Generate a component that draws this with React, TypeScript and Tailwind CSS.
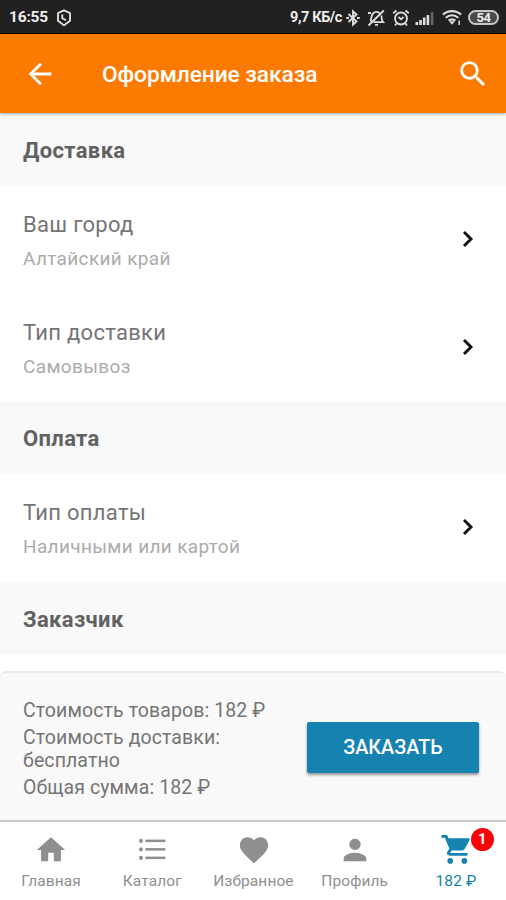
import type { ReactNode } from "react";
import { MdArrowBack, MdFavorite, MdHome, MdPerson, MdSearch } from "react-icons/md";

function ShieldIcon() {
  return (
    <svg width="16" height="18" viewBox="0 0 16 18" fill="none" stroke="#e8e8e8" strokeWidth="1.8">
      <path d="M8 1.4 14 4V11.8L8 16.4 2 11.8V4Z" strokeLinejoin="round" />
      <path d="M6.3 5.6V9.2L10 11.2" />
    </svg>
  );
}

function BluetoothIcon() {
  return (
    <svg width="14" height="18" viewBox="0 0 14 18" fill="none" stroke="#dedede" strokeWidth="1.9">
      <path d="M2.5 5 10.5 12.5 7 15.7V2.3L10.5 5.5 2.5 13" />
      <path d="M.3 9H3M11 9H13.7" />
    </svg>
  );
}

function BellOffIcon() {
  return (
    <svg width="18" height="18" viewBox="0 0 18 18" fill="none" stroke="#dedede" strokeWidth="1.8">
      <path d="M3.5 12.5C4.5 11 4 6 6 4.5 8 2.5 11 2.5 12.5 4.2M14.5 6.5C14.5 9 14.5 11.5 16.2 13.2H6.5M8 15.8H11M1 4H4M16.8 1.5 1.5 16.5" />
    </svg>
  );
}

function AlarmIcon() {
  return (
    <svg width="18" height="18" viewBox="0 0 18 18" fill="none" stroke="#dedede" strokeWidth="1.8">
      <circle cx="9" cy="9.5" r="6" />
      <path d="M1.2 4.2 4.5 1.5M16.8 4.2 13.5 1.5M6.5 8 9 10.3 11.5 8M4.5 14.5 3 16.5M13.5 14.5 15 16.5" />
    </svg>
  );
}

function SignalIcon() {
  return (
    <svg width="20" height="16" viewBox="0 0 20 16" fill="#dedede">
      <rect x="0.5" y="12" width="2.6" height="3" />
      <rect x="4.2" y="10" width="2.6" height="5" />
      <rect x="7.9" y="7.5" width="2.6" height="7.5" />
      <rect x="11.6" y="5" width="2.6" height="10" />
      <rect x="15.8" y="2" width="2.6" height="13" fill="#666666" />
    </svg>
  );
}

function WifiIcon() {
  return (
    <svg width="20" height="17" viewBox="0 0 20 17" fill="none" stroke="#dedede" strokeWidth="2.2">
      <path d="M1 5.6C6 .9 14 .9 19 5.6M3.7 8.8C7.5 5.4 12.5 5.4 16.3 8.8M6.6 11.7C8.8 10 11.2 10 13.4 11.7" />
      <path d="M7 12.2 10 15.7 13 12.2Z" fill="#dedede" stroke="none" />
      <path d="M17.2 11.5V16" strokeWidth="1.5" />
    </svg>
  );
}

function ListIcon() {
  return (
    <svg width="34" height="34" viewBox="0 0 34 34" fill="#8f8f8f">
      <rect x="4.2" y="5.9" width="3.6" height="3.8" rx="1" />
      <rect x="4.2" y="14.4" width="3.6" height="3.8" rx="1" />
      <rect x="4.2" y="22.9" width="3.6" height="3.8" rx="1" />
      <rect x="10.4" y="6.6" width="20" height="2.5" />
      <rect x="10.4" y="15.1" width="20" height="2.5" />
      <rect x="10.4" y="23.6" width="20" height="2.5" />
    </svg>
  );
}

function CartIcon() {
  return (
    <svg width="34" height="34" viewBox="0 0 34 34" fill="currentColor">
      <path d="M2.5 2H8L9.6 5.2H29.6C30.6 5.2 31.1 6 30.6 6.9L25.8 15.8C25.2 16.9 24.4 17.4 23.2 17.4H12.6L11.3 20H28.5V22.8H10.6C8.6 22.8 7.3 21 8.3 19.1L10.3 15.6 5.8 4.7H2.5Z" />
      <circle cx="11.2" cy="27.9" r="2.8" />
      <circle cx="25.4" cy="27.9" r="2.8" />
    </svg>
  );
}

function Chevron() {
  return (
    <svg className="mr-8 mb-px" width="12" height="18" viewBox="0 0 12 18" fill="none" stroke="#111111" strokeWidth="2.9">
      <path d="M2 2 9 9 2 16" />
    </svg>
  );
}

function SectionTitle({ children }: { children: ReactNode }) {
  return (
    <h2 className="flex h-[73px] shrink-0 items-center bg-[#f9f9f9] pt-[2px] pl-[23px] text-[22px] font-bold tracking-[0.35px] text-[#616161]">
      {children}
    </h2>
  );
}

function Row({ title, value }: { title: string; value: string }) {
  return (
    <div className="flex h-[107.5px] shrink-0 items-center justify-between pl-[23px]">
      <div className="pt-[5px]">
        <p className="text-[22px] leading-[34px] tracking-[0.3px] text-[#757575]">{title}</p>
        <p className="text-[19px] leading-[34px] tracking-[0.35px] text-[#ababab]">{value}</p>
      </div>
      <Chevron />
    </div>
  );
}

function Tab({ icon, label, active }: { icon: ReactNode; label: string; active?: boolean }) {
  return (
    <div className={`flex flex-1 flex-col items-center pt-[11px] ${active ? "text-[#1682b0]" : "text-[#8f8f8f]"}`}>
      <div className="relative ml-px h-[34px] w-[34px]">{icon}</div>
      <span className="mt-[5px] ml-px text-[15.5px] leading-[18px] tracking-[0.1px]">{label}</span>
    </div>
  );
}

export default function App() {
  return (
    <div className="flex h-[900px] w-[506px] flex-col overflow-hidden bg-white font-['Roboto','Noto_Sans',sans-serif]">
      {/* Status bar */}
      <div className="flex h-[34px] shrink-0 items-center justify-between border-b border-black bg-[#212121] pt-[2px] pr-[7px] pl-[9px] text-[#eeeeee]">
        <div className="flex items-center gap-[8px]">
          <span className="text-[15.5px] font-bold tracking-[-0.2px]">16:55</span>
          <ShieldIcon />
        </div>
        <div className="flex items-center">
          <span className="text-[14.5px] font-bold tracking-[-0.4px]">9,7 КБ/с</span>
          <span className="ml-[4px]"><BluetoothIcon /></span>
          <span className="ml-[7px]"><BellOffIcon /></span>
          <span className="ml-[7px]"><AlarmIcon /></span>
          <span className="ml-[5px]"><SignalIcon /></span>
          <span className="ml-[7px]"><WifiIcon /></span>
          <span className="ml-[6px] flex h-[15px] w-[31px] items-center justify-center rounded-full border-2 border-[#c8c8c8] bg-[#4a4a4a] text-[13px] font-bold tracking-[-0.5px]">
            54
          </span>
        </div>
      </div>

      {/* App bar */}
      <header className="z-10 flex h-[79px] shrink-0 items-center bg-[#fc7a00] pr-4 pl-[23px] text-white shadow-[0_1px_3px_rgba(0,0,0,0.35)]">
        <MdArrowBack size={34} />
        <h1 className="ml-[45px] flex-1 pt-[3px] text-[22.8px] font-medium tracking-[-0.1px]">Оформление заказа</h1>
        <MdSearch size={34} />
      </header>

      <main className="flex min-h-0 flex-1 flex-col overflow-hidden">
        <SectionTitle>Доставка</SectionTitle>
        <Row title="Ваш город" value="Алтайский край" />
        <Row title="Тип доставки" value="Самовывоз" />
        <SectionTitle>Оплата</SectionTitle>
        <Row title="Тип оплаты" value="Наличными или картой" />
        <SectionTitle>Заказчик</SectionTitle>
      </main>

      {/* Order total */}
      <section className="flex h-[149px] shrink-0 items-center justify-between rounded-t-md border-t-2 border-[#eaeaea] bg-[#f9f9f9] pt-[2px] pr-[27px] pl-[23px]">
        <div className="w-[250px] pt-[2px] text-[19.5px] leading-[23px] tracking-[0.1px] text-[#757575]">
          <p>Стоимость товаров: 182 ₽</p>
          <p className="mt-1">Стоимость доставки: бесплатно</p>
          <p className="mt-1">Общая сумма: 182 ₽</p>
        </div>
        <button className="h-[51px] w-[172px] rounded-xs bg-[#1682b0] pt-px text-[19.8px] font-medium text-white shadow-[0_2px_3px_rgba(0,0,0,0.4)]">
          ЗАКАЗАТЬ
        </button>
      </section>

      {/* Bottom navigation */}
      <nav className="flex h-[80px] shrink-0 border-t-2 border-[#c8c8c8] bg-white">
        <Tab icon={<MdHome size={34} />} label="Главная" />
        <Tab icon={<ListIcon />} label="Каталог" />
        <Tab icon={<MdFavorite size={34} />} label="Избранное" />
        <Tab icon={<MdPerson size={34} />} label="Профиль" />
        <Tab
          active
          label="182 ₽"
          icon={
            <>
              <CartIcon />
              <span className="absolute -top-[5px] left-[32px] flex h-[23px] w-[23px] items-center justify-center rounded-full bg-[#fb0007] text-[15px] font-bold text-white">
                1
              </span>
            </>
          }
        />
      </nav>
    </div>
  );
}
